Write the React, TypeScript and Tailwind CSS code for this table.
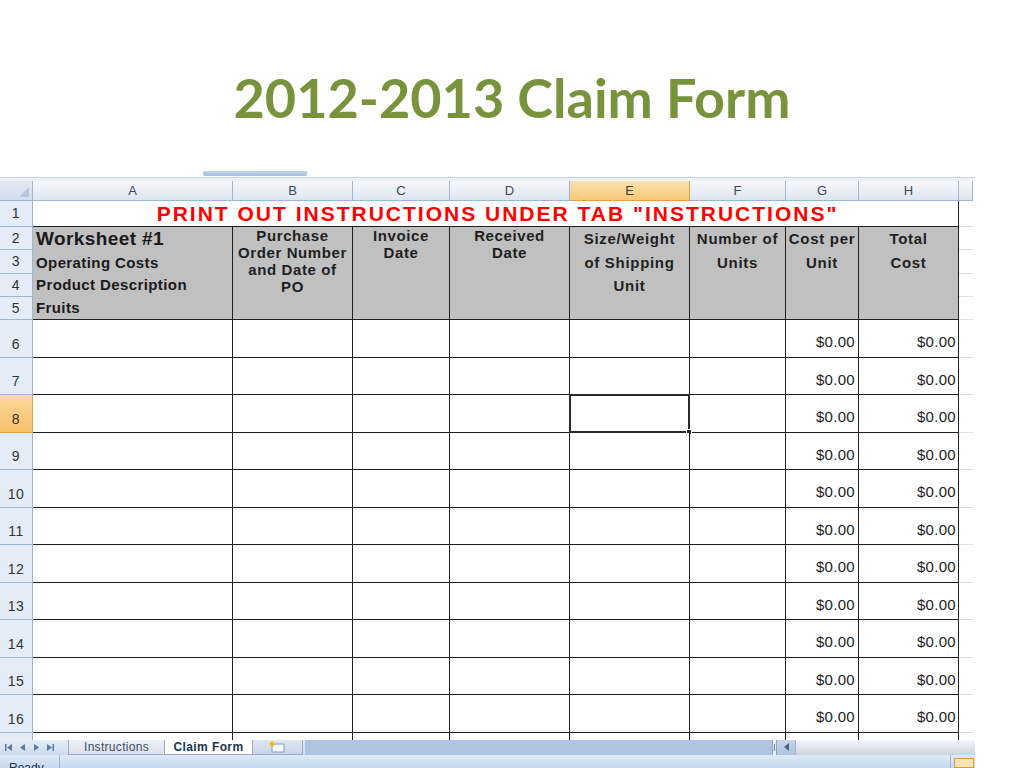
import React from "react";

const DATA_ROWS = [6, 7, 8, 9, 10, 11, 12, 13, 14, 15, 16];
const LETTERS = ["A", "B", "C", "D", "E", "F", "G", "H", ""];

function Corner() {
  return (
    <div className="relative bg-gradient-to-b from-[#e3eaf4] to-[#d3deec] border-r border-b border-[#9eb6ce]">
      <svg className="absolute right-[3px] bottom-[3px]" width="10" height="10" viewBox="0 0 10 10">
        <polygon points="10,0 10,10 0,10" fill="#b6c8de" />
      </svg>
    </div>
  );
}

function ColHeader({ letter }: { letter: string }) {
  const selected = letter === "E";
  return (
    <div
      className={
        selected
          ? "flex items-center justify-center bg-gradient-to-b from-[#fbe2b2] to-[#f7c777] border-r border-b border-[#d9a24a] text-[13px] text-[#3b3b3b]"
          : "flex items-center justify-center bg-gradient-to-b from-[#f7f9fc] to-[#dde5ef] border-r border-b border-[#9eb6ce] text-[13px] text-[#3d4a5c]"
      }
    >
      {letter}
    </div>
  );
}

function RowHeader({ n, bottom }: { n: number; bottom?: boolean }) {
  const selected = n === 8;
  return (
    <div
      className={
        (selected
          ? "bg-gradient-to-b from-[#fbd99a] to-[#f7c06a] border-[#d9a24a] "
          : "bg-[#e4ecf7] border-[#9eb6ce] ") +
        (bottom ? "items-end pb-[2px] " : "items-center ") +
        "flex justify-center border-r border-b text-[14px] tracking-[0.5px] text-[#333]"
      }
    >
      {n}
    </div>
  );
}

function HeaderLines({ lines }: { lines: string[] }) {
  const heights = ["h-[23px]", "h-[24px]", "h-[23px]"];
  return (
    <div className="row-span-4 bg-[#c0c0c0] border-r border-b border-[#1f1f1f] flex flex-col text-[15px] font-bold tracking-[0.7px] text-[#1f1f1f]">
      {lines.map((l, i) => (
        <div key={i} className={heights[i] + " flex items-center justify-center pt-[2px]"}>
          {l}
        </div>
      ))}
    </div>
  );
}

function WrapHeader({ lines }: { lines: string[] }) {
  return (
    <div className="row-span-4 bg-[#c0c0c0] border-r border-b border-[#1f1f1f] flex flex-col items-center text-[15px] font-bold tracking-[0.6px] leading-[17px] text-[#1f1f1f]">
      {lines.map((l, i) => (
        <div key={i} className="whitespace-nowrap">
          {l}
        </div>
      ))}
    </div>
  );
}

function Sheet() {
  return (
    <div className="grid grid-cols-[33px_200px_120px_97px_120px_120px_96px_73px_100px_14px] grid-rows-[20px_26px_23px_24px_23px_23px_repeat(11,37.5px)_7px] font-['Liberation_Sans',Arial,sans-serif]">
      <Corner />
      {LETTERS.map((l, i) => (
        <ColHeader key={i} letter={l} />
      ))}

      {/* row 1 */}
      <RowHeader n={1} />
      <div className="col-span-8 flex items-center justify-center bg-white border-r border-b border-[#1f1f1f] text-[21px] font-bold tracking-[2px] text-[#ff0000] pt-[1px] pl-[4px]">
        PRINT OUT INSTRUCTIONS UNDER TAB "INSTRUCTIONS"
      </div>
      <div className="bg-white border-b border-[#d8dde4]" />

      {/* rows 2-5 */}
      <RowHeader n={2} />
      <div className="row-span-4 bg-[#c0c0c0] border-r border-b border-[#1f1f1f] flex flex-col pl-[3px] font-bold text-[#1a1a1a]">
        <div className="h-[23px] flex items-center text-[19px] tracking-[0.4px] pt-[2px]">Worksheet #1</div>
        <div className="h-[24px] flex items-center text-[15px] tracking-[0.4px] pt-[2px]">Operating Costs</div>
        <div className="h-[23px] flex items-center text-[15px] tracking-[0.4px]">Product Description</div>
        <div className="h-[23px] flex items-center text-[15px] tracking-[0.4px]">Fruits</div>
      </div>
      <WrapHeader lines={["Purchase", "Order Number", "and Date of", "PO"]} />
      <WrapHeader lines={["Invoice", "Date"]} />
      <WrapHeader lines={["Received", "Date"]} />
      <HeaderLines lines={["Size/Weight", "of Shipping", "Unit"]} />
      <HeaderLines lines={["Number of", "Units"]} />
      <HeaderLines lines={["Cost per", "Unit"]} />
      <HeaderLines lines={["Total", "Cost"]} />
      <div className="bg-white border-b border-[#d8dde4]" />
      <RowHeader n={3} />
      <div className="bg-white border-b border-[#d8dde4]" />
      <RowHeader n={4} />
      <div className="bg-white border-b border-[#d8dde4]" />
      <RowHeader n={5} />
      <div className="bg-white border-b border-[#d8dde4]" />

      {/* rows 6-16 */}
      {DATA_ROWS.map((n) => (
        <React.Fragment key={n}>
          <RowHeader n={n} bottom />
          <div className="bg-white border-r border-b border-[#1f1f1f]" />
          <div className="bg-white border-r border-b border-[#1f1f1f]" />
          <div className="bg-white border-r border-b border-[#1f1f1f]" />
          <div className="bg-white border-r border-b border-[#1f1f1f]" />
          <div className="relative bg-white border-r border-b border-[#1f1f1f]">
            {n === 8 && (
              <div className="absolute -inset-[1px] border-2 border-[#2b2b2b]">
                <div className="absolute -right-[4px] -bottom-[4px] w-[6px] h-[6px] bg-[#2b2b2b] border border-white" />
              </div>
            )}
          </div>
          <div className="bg-white border-r border-b border-[#1f1f1f]" />
          <div className="flex items-end justify-end pr-[3px] pb-[3px] bg-white border-r border-b border-[#1f1f1f] text-[15px] tracking-[0.3px] text-[#222]">
            $0.00
          </div>
          <div className="flex items-end justify-end pr-[2px] pb-[3px] bg-white border-r border-b border-[#1f1f1f] text-[15px] tracking-[0.3px] text-[#222]">
            $0.00
          </div>
          <div className="bg-white border-b border-[#d8dde4]" />
        </React.Fragment>
      ))}

      {/* partial row 17 */}
      <div className="bg-[#e4ecf7] border-r border-[#9eb6ce]" />
      <div className="bg-white border-r border-[#1f1f1f]" />
      <div className="bg-white border-r border-[#1f1f1f]" />
      <div className="bg-white border-r border-[#1f1f1f]" />
      <div className="bg-white border-r border-[#1f1f1f]" />
      <div className="bg-white border-r border-[#1f1f1f]" />
      <div className="bg-white border-r border-[#1f1f1f]" />
      <div className="bg-white border-r border-[#1f1f1f]" />
      <div className="bg-white border-r border-[#1f1f1f]" />
      <div className="bg-white" />
    </div>
  );
}

function NavArrows() {
  return (
    <div className="flex items-center gap-[7px] pl-[5px] w-[68px]">
      <svg width="8" height="7" viewBox="0 0 8 7">
        <rect x="0" y="0" width="1.5" height="7" fill="#5a7aa8" />
        <polygon points="7,0 7,7 2,3.5" fill="#5a7aa8" />
      </svg>
      <svg width="6" height="7" viewBox="0 0 6 7">
        <polygon points="5,0 5,7 0,3.5" fill="#5a7aa8" />
      </svg>
      <svg width="6" height="7" viewBox="0 0 6 7">
        <polygon points="1,0 1,7 6,3.5" fill="#5a7aa8" />
      </svg>
      <svg width="8" height="7" viewBox="0 0 8 7">
        <polygon points="1,0 1,7 6,3.5" fill="#5a7aa8" />
        <rect x="6.5" y="0" width="1.5" height="7" fill="#5a7aa8" />
      </svg>
    </div>
  );
}

function TabBar() {
  return (
    <div className="h-[15px] flex bg-[#adc3e0] font-['Liberation_Sans',Arial,sans-serif]">
      <div className="flex bg-gradient-to-b from-[#e6eef8] to-[#ccdaee] w-[305px]">
        <NavArrows />
        <div className="w-[97px] flex items-center justify-center bg-gradient-to-b from-[#eef2f7] to-[#d9e1eb] border border-t-0 border-[#9aabc2] text-[12px] tracking-[0.3px] text-[#3d4d63]">
          Instructions
        </div>
        <div className="w-[88px] flex items-center justify-center bg-white border-b border-r border-[#9aabc2] text-[12px] font-bold tracking-[0.4px] text-[#20344f]">
          Claim Form
        </div>
        <div className="w-[50px] flex items-center pl-[14px] bg-gradient-to-b from-[#dfe7f2] to-[#c8d5e8] border-b border-r border-[#9aabc2]">
          <svg width="20" height="12" viewBox="0 0 20 12">
            <rect x="5" y="3" width="12" height="8" fill="#f4f7fb" stroke="#8aa0bd" />
            <circle cx="5" cy="3" r="2.6" fill="#f6c94a" />
            <path d="M5 0 V6 M2 3 H8" stroke="#e9a923" strokeWidth="0.8" />
          </svg>
        </div>
      </div>
      <div className="flex-1" />
      <div className="w-[5px] flex items-center justify-center bg-[#e8eef6] border-x border-[#8ea6c6]">
        <div className="w-[1px] h-[7px] bg-[#6c7f99]" />
      </div>
      <div className="w-[18px] flex items-center justify-center bg-gradient-to-b from-[#c6d5ea] to-[#aec3df]">
        <svg width="5" height="8" viewBox="0 0 5 8">
          <polygon points="5,0 5,8 0,4" fill="#4d6181" />
        </svg>
      </div>
      <div className="w-[180px] bg-gradient-to-b from-[#f4f6f9] to-[#cdd5df] border-l border-[#a3b3c8]" />
    </div>
  );
}

function StatusBar() {
  return (
    <div className="h-[13px] flex bg-gradient-to-b from-[#dfe9f6] to-[#c6d7ee] overflow-hidden font-['Liberation_Sans',Arial,sans-serif]">
      <div className="w-[60px] border-r border-[#9fb4d1] pl-[9px] pt-[6px] text-[12px] leading-[14px] text-[#1e2f48]">
        Ready
      </div>
      <div className="flex-1" />
      <div className="w-[25px] border-l border-[#9fb4d1] pl-[3px] pt-[3px]">
        <div className="h-[10px] w-[20px] border border-[#d79b3d] bg-[#fbe2b2]" />
      </div>
    </div>
  );
}

export default function App() {
  return (
    <div className="w-[1024px] h-[768px] bg-white overflow-hidden">
      <div className="h-[170px] flex justify-center pt-[70px]">
        <h1 className="font-['Lato',sans-serif] font-bold text-[54px] leading-[56px] text-[#77933c]">
          2012-2013 Claim Form
        </h1>
      </div>
      <div className="w-[975px]">
        <div className="h-[11px] flex flex-col">
          <div className="h-[7px] pl-[203px] pt-[1px]">
            <div className="h-[5px] w-[104px] bg-gradient-to-b from-[#c5d6ec] to-[#a4bde0] rounded-b-[2px]" />
          </div>
          <div className="h-[1px] bg-[#c3d1e4]" />
          <div className="h-[3px] bg-[#eef2f8]" />
        </div>
        <Sheet />
        <TabBar />
        <StatusBar />
      </div>
    </div>
  );
}
